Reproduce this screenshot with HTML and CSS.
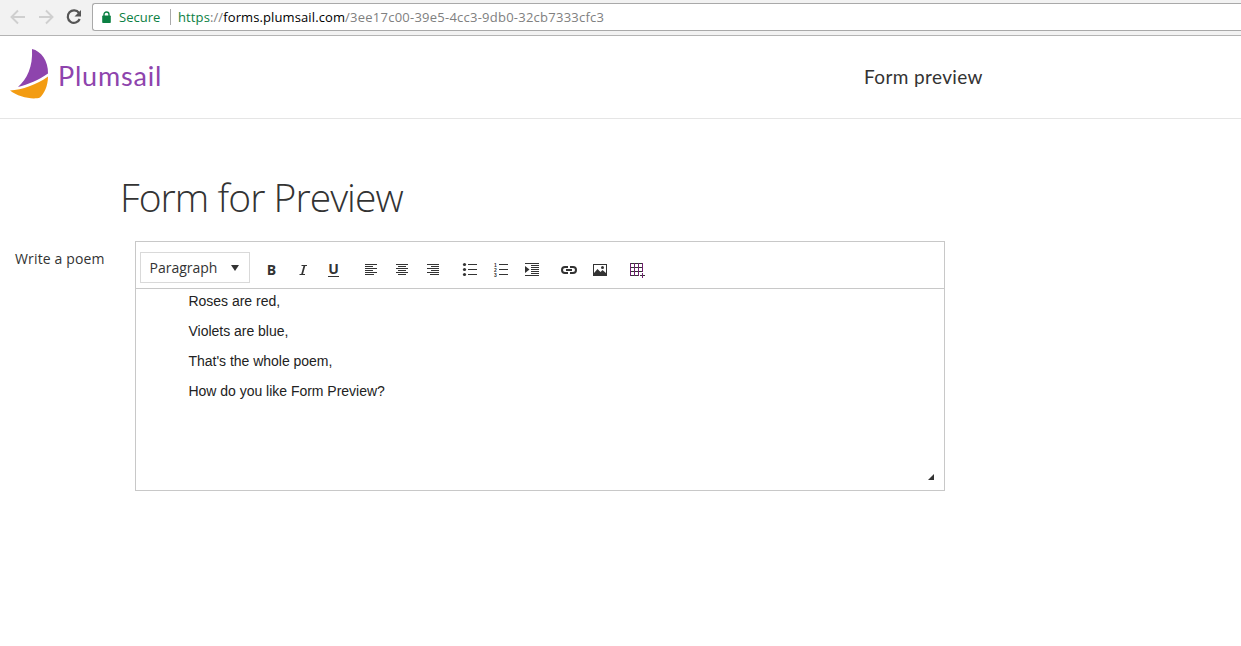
FILE: index.html
```html
<!DOCTYPE html>
<html lang="en">
<head>
<meta charset="utf-8">
<title>Form preview</title>
<link rel="stylesheet" href="styles.css">
</head>
<body>
<div class="browser-bar">
  <svg class="nav-icons" width="92" height="35" viewBox="0 0 92 35" fill="none">
    <path d="M25 17H12M18 10.500L11.500 17L18 23.500M39 17h13M46 10.500l6.500 6.500l-6.500 6.500" stroke="#cfcfcf" stroke-width="1.900"/>
    <path d="M79 13A6.200 6.200 0 1 0 79.700 19" stroke="#555" stroke-width="2.200"/>
    <path d="M81 10v6.500h-6.500z" fill="#555"/>
  </svg>
  <div class="address">
    <svg class="lock" width="9" height="12" viewBox="0 0 9 12"><path d="M2 5V3.500a2.500 2.500 0 0 1 5 0V5" fill="none" stroke="#0b8043" stroke-width="1.400"/><rect x=".2" y="4.500" width="8.600" height="7.500" rx=".8" fill="#0b8043"/></svg>
    <span class="secure">Secure</span>
    <span class="url"><span class="scheme">https</span><span class="muted">://</span><span class="host">forms.plumsail.com</span><span class="muted path">/3ee17c00-39e5-4cc3-9db0-32cb7333cfc3</span></span>
  </div>
</div>
<header class="header">
  <div class="logo">
    <svg width="39" height="50" viewBox="0 0 39 50">
      <path d="M22 0C31 2 38.500 12 38 24.500C29 31 18 35.500 8 38C17 30 23 18 22 0Z" fill="#8e44ad"/>
      <path d="M38 27.500C38 37 34 45 30 48.500C23 51 8 48 0 41.500C12 41 27 35.500 38 27.500Z" fill="#f39c12"/>
    </svg>
    <span class="brand">Plumsail</span>
  </div>
  <span class="header-title">Form preview</span>
</header>
<main>
  <h1 class="title">Form for Preview</h1>
  <div class="field">
    <label class="label">Write a poem</label>
    <div class="editor">
      <div class="toolbar">
        <div class="select"><span>Paragraph</span><svg width="8" height="6" viewBox="0 0 8 6"><path d="M0 0h8L4 6z" fill="#333"/></svg></div>
        <div class="group">
          <span class="tool bold">B</span>
          <span class="tool"><svg width="16" height="16"><path d="M6.500 3.500h5.500M4.500 12.500h5.500"/><path class="stem" d="M9.500 3.500l-2.500 9"/></svg></span>
          <span class="tool underline"><span>U</span></span>
        </div>
        <div class="group">
          <span class="tool"><svg width="16" height="16"><path d="M2 2.500h12M2 4.500h8M2 6.500h12M2 8.500h8M2 10.500h12M2 12.500h9"/></svg></span>
          <span class="tool"><svg width="16" height="16"><path d="M2 2.500h12M4 4.500h8M2 6.500h12M4 8.500h8M2 10.500h12M4 12.500h8"/></svg></span>
          <span class="tool"><svg width="16" height="16"><path d="M2 2.500h12M6 4.500h8M2 6.500h12M6 8.500h8M2 10.500h12M5 12.500h9"/></svg></span>
        </div>
        <div class="group">
          <span class="tool"><svg width="16" height="16"><path d="M6 2.500h9M6 7.500h9M6 12.500h9"/><g class="solid"><circle cx="2.500" cy="2.500" r="1.600"/><circle cx="2.500" cy="7.500" r="1.600"/><circle cx="2.500" cy="12.500" r="1.600"/></g></svg></span>
          <span class="tool"><svg width="16" height="16"><path d="M6 2.500h9M6 7.500h9M6 12.500h9"/><g class="digits"><text x="1" y="4.500">1</text><text x="1" y="9.500">2</text><text x="1" y="14.500">3</text></g></svg></span>
          <span class="tool"><svg width="16" height="16"><path d="M1 1.500h14M7 3.500h8M7 5.500h8M7 7.500h8M7 9.500h8M7 11.500h8M1 13.500h14"/><path class="solid" d="M1 4l4.500 3.500l-4.500 3.500z"/></svg></span>
        </div>
        <div class="group">
          <span class="tool"><svg width="16" height="16"><path class="chain" d="M7 5H4a3 3 0 0 0 0 6H7M9 5h3a3 3 0 0 1 0 6H9M5 8h6"/></svg></span>
          <span class="tool"><svg width="16" height="16"><path fill-rule="evenodd" class="solid" d="M1 2h14v12H1zM2 3v8l3.500-4l3 3l2-2L14 11V3z"/><circle class="solid" cx="10.500" cy="5.500" r="1.500"/></svg></span>
        </div>
        <div class="group">
          <span class="tool"><svg width="16" height="16"><path d="M1 1.500h13M1 5.500h13M1 9.500h13M1 13.500h9M11 13.500h5"/><path class="grid-v" d="M1.500 1v13M5.500 1v13M9.500 1v13M13.500 1v9M13.500 11v5"/></svg></span>
        </div>
      </div>
      <div class="content">
        <p>Roses are red,</p>
        <p>Violets are blue,</p>
        <p>That's the whole poem,</p>
        <p>How do you like Form Preview?</p>
      </div>
      <svg class="resize" width="6" height="6"><path d="M6 0v6H0z" fill="#333"/></svg>
    </div>
  </div>
</main>
</body>
</html>
```
FILE: styles.css
```css
* { box-sizing: border-box; }
body { margin: 0; background: #fff; color: #333; font-family: "Open Sans", "Noto Sans", sans-serif; overflow: hidden; }
.browser-bar { height: 36px; background: #f2f2f2; border-bottom: 1px solid #b4b4b4; display: flex; }
.nav-icons { flex: none; }
.address { flex: 1; height: 28px; margin-top: 3px; background: #fff; border: 1px solid #a9a9a9; border-right: 0; border-radius: 3px 0 0 3px; display: flex; align-items: center; font-size: 13px; line-height: 26px; white-space: nowrap; }
.lock { margin-left: 9px; }
.secure { color: #0b8043; margin-left: 8px; width: 52px; height: 16px; line-height: 16px; border-right: 1px solid #aaa; }
.url { margin-left: 7px; letter-spacing: .11px; }
.path { letter-spacing: .24px; }
.scheme { color: #0b8043; }
.muted { color: #808080; }
.host { color: #000; }
.header { height: 83px; border-bottom: 1px solid #e5e5e5; display: flex; align-items: center; }
.logo { display: flex; align-items: center; width: 864px; padding: 0 0 6px 10px; }
.logo svg { flex: none; margin-top: -1px; }
.brand { color: #8e44ad; font: 400 27px/36px Lato, sans-serif; letter-spacing: .8px; margin: 4px 0 0 9px; }
.header-title { font: 400 19px/24px Lato, sans-serif; letter-spacing: .38px; }
main { padding: 50px 0 0; }
.title { margin: 0 0 0 120px; font-size: 39px; font-weight: 300; line-height: 56px; height: 72px; letter-spacing: -.95px; white-space: nowrap; }
.field { display: flex; }
.label { width: 135px; padding: 7px 0 0 15px; font-size: 14px; line-height: 22px; letter-spacing: .15px; white-space: nowrap; }
.editor { width: 810px; height: 250px; border: 1px solid #c8c8c8; display: flex; flex-direction: column; }
.toolbar { height: 47px; flex: none; border-bottom: 1px solid #c8c8c8; padding: 10px 0 0 4px; display: flex; gap: 6px; }
.select { width: 110px; height: 31px; border: 1px solid #d9d9d9; padding: 0 10px 0 8.500px; display: flex; align-items: center; justify-content: space-between; font-size: 14px; }
.group { display: flex; padding-top: 2px; }
.tool { width: 31px; height: 31px; display: flex; align-items: center; justify-content: center; font-weight: 700; font-size: 14px; }
.tool svg { stroke: #333; fill: none; }
.tool .solid { fill: #333; stroke: none; }
.tool .chain { stroke-width: 2; }
.tool .stem { stroke-width: 1.700; }
.tool .grid-v { stroke: #702070; }
.digits { fill: #333; stroke: none; font: 700 5px "Liberation Sans", sans-serif; }
.underline span { height: 14px; line-height: 12px; border-bottom: 1px solid #333; }
.content { flex: 1; padding: 2px 0 0 52.500px; font: 14px/20px "Liberation Sans", Arial, sans-serif; letter-spacing: -.02px; color: #222; }
.content p { margin: 0 0 10px; }
.resize { align-self: flex-end; margin: 0 10px 10px 0; flex: none; }
```
